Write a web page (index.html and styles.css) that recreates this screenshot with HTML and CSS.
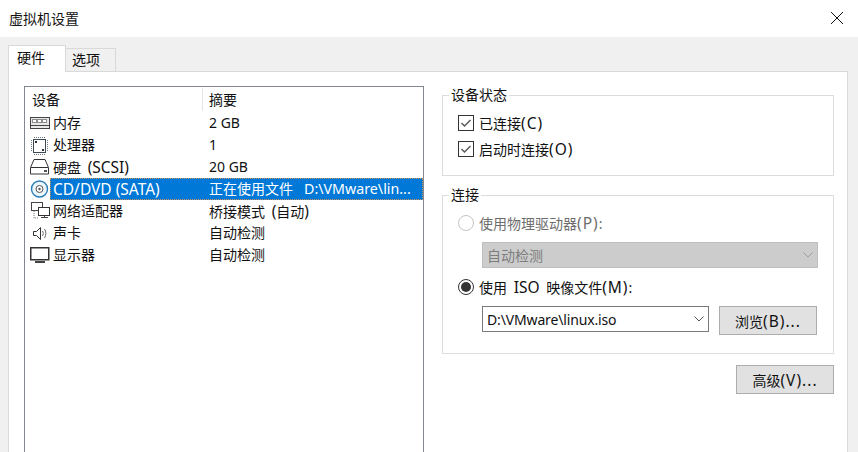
FILE: index.html
```html
<!DOCTYPE html>
<html>
<head>
  <title>虚拟机设置</title>
  <link rel="stylesheet" href="styles.css">
</head>
<body>

  <div class="titlebar">
    <span>虚拟机设置</span>
    <svg class="close" width="12" height="12" viewBox="0 0 12 12"><path d="M0 0L12 12M12 0L0 12" stroke="#111" fill="none"/></svg>
  </div>

  <div class="dialog">
    <div class="tabs">
      <div class="tab active">硬件</div>
      <div class="tab">选项</div>
    </div>

    <div class="pane">
      <div class="device-list">
        <div class="list-head">
          <div class="col-name">设备</div>
          <div class="col-sum">摘要</div>
        </div>

        <div class="row">
          <svg class="icon" width="21" height="20" viewBox="0 0 21 20"><rect x="1.5" y="4.5" width="19" height="11" fill="#e8e8e8" stroke="#444"/><path d="M3 6h15v4H3z" fill="#8c8c8c"/><path d="M4 7h3v2H4zM9 7h3v2H9zM14 7h3v2h-3z" fill="#fff"/><path d="M2 12.5h18" stroke="#444"/></svg>
          <div class="cells">
            <div class="col-name">内存</div>
            <div class="col-sum">2 GB</div>
          </div>
        </div>
        <div class="row">
          <svg class="icon" width="21" height="20" viewBox="0 0 21 20"><rect x="4.5" y="4.5" width="12" height="13" fill="#fff" stroke="#3d4a55"/><path d="M5 2.5h11M5 19.5h11M2.5 5v12M18.5 5v12" stroke="#6b7780" stroke-dasharray="1 1"/><path d="M6 6h2v2H6zM13 14h2v2h-2z" fill="#333"/></svg>
          <div class="cells">
            <div class="col-name">处理器</div>
            <div class="col-sum">1</div>
          </div>
        </div>
        <div class="row">
          <svg class="icon" width="21" height="20" viewBox="0 0 21 20"><path d="M5 2.5h11l3.500 8v6.500h-18v-6.500z" fill="#fff" stroke="#333"/><path d="M2 10.5h17" stroke="#333"/><path d="M15 13h3v2h-3z" fill="#555"/></svg>
          <div class="cells">
            <div class="col-name spaced">硬盘 <span class="en">(SCSI)</span></div>
            <div class="col-sum">20 GB</div>
          </div>
        </div>
        <div class="row selected">
          <svg class="icon" width="21" height="20" viewBox="0 0 21 20"><circle cx="10.5" cy="10" r="8" fill="#eaf5fc" stroke="#2b7fb8" stroke-width="1.4"/><circle cx="10.5" cy="10" r="3.5" fill="#fff" stroke="#555"/><circle cx="10.5" cy="10" r="1.2" fill="#555"/></svg>
          <div class="cells">
            <div class="col-name"><span class="en">CD/DVD (SATA)</span></div>
            <div class="col-sum">正在使用文件<span class="path">D:\VMware\lin...</span></div>
          </div>
        </div>
        <div class="row">
          <svg class="icon" width="21" height="20" viewBox="0 0 21 20"><rect x="2.5" y="1.5" width="11" height="8" fill="#fff" stroke="#444"/><rect x="9.5" y="6.5" width="11" height="8" fill="#fff" stroke="#333"/><path d="M12 16.5h7M15.5 15v1" stroke="#444" fill="none"/><path d="M5 10v7h5" stroke="#777" fill="none" stroke-dasharray="1 1"/></svg>
          <div class="cells">
            <div class="col-name">网络适配器</div>
            <div class="col-sum spaced">桥接模式 <span class="en">(</span>自动<span class="en">)</span></div>
          </div>
        </div>
        <div class="row">
          <svg class="icon" width="21" height="20" viewBox="0 0 21 20"><path d="M4.5 8.5h3l4-4v12l-4-4h-3z" fill="#fff" stroke="#333"/><path d="M13.5 8c1 1.500 1 3.500 0 5M15.5 6c1.800 2.500 1.800 6 0 9" stroke="#666" fill="none"/></svg>
          <div class="cells">
            <div class="col-name">声卡</div>
            <div class="col-sum">自动检测</div>
          </div>
        </div>
        <div class="row">
          <svg class="icon" width="21" height="20" viewBox="0 0 21 20"><rect x="1.75" y="2.75" width="18" height="12" fill="#fff" stroke="#333" stroke-width="1.5"/><path d="M6 17h10" stroke="#444" stroke-width="2"/></svg>
          <div class="cells">
            <div class="col-name">显示器</div>
            <div class="col-sum">自动检测</div>
          </div>
        </div>
      </div>

      <div class="settings">
        <fieldset class="group status">
          <legend>设备状态</legend>
          <div class="option">
            <span class="checkbox"><svg width="12" height="12" viewBox="0 0 12 12"><path d="M1.5 6L4.5 9L10.5 3" stroke="#555" stroke-width="1.4" fill="none"/></svg></span>
            <span>已连接<span class="en key">(C)</span></span>
          </div>
          <div class="option">
            <span class="checkbox"><svg width="12" height="12" viewBox="0 0 12 12"><path d="M1.5 6L4.5 9L10.5 3" stroke="#555" stroke-width="1.4" fill="none"/></svg></span>
            <span>启动时连接<span class="en key">(O)</span></span>
          </div>
        </fieldset>

        <fieldset class="group connect">
          <legend>连接</legend>
          <div class="option disabled">
            <span class="radio"></span>
            <span>使用物理驱动器<span class="en key">(P)</span>:</span>
          </div>
          <div class="field">
            <div class="select locked">
              <span>自动检测</span>
              <svg width="10" height="6" viewBox="0 0 10 6"><path d="M0.5 0.5L5 5L9.5 0.5" stroke="#a0a0a0" fill="none"/></svg>
            </div>
          </div>
          <div class="option">
            <span class="radio on"></span>
            <span class="spaced">使用 <span class="en">ISO</span> 映像文件<span class="en key">(M)</span>:</span>
          </div>
          <div class="field">
            <div class="select iso">
              <span class="iso-path">D:\VMware\linux.iso</span>
              <svg width="10" height="6" viewBox="0 0 10 6"><path d="M0.5 0.5L5 5L9.5 0.5" stroke="#555" fill="none"/></svg>
            </div>
            <button class="btn">浏览<span class="en key">(B)...</span></button>
          </div>
        </fieldset>

        <div class="actions">
          <button class="btn">高级<span class="en key">(V)...</span></button>
        </div>
      </div>
    </div>
  </div>

</body>
</html>
```

FILE: styles.css
```css
body {
  margin: 0;
  height: 452px;
  overflow: hidden;
  font-family: "Noto Sans", "Noto Sans CJK SC", sans-serif;
  font-size: 14px;
  color: #111;
  background: #fff;
}

.en {
  font-size: 15.5px;
}

.key {
  letter-spacing: 1px;
}

.spaced {
  word-spacing: 3px;
}

.titlebar {
  height: 37px;
  display: flex;
  align-items: center;
  justify-content: space-between;
  padding: 0 15px 2px 9px;
  box-sizing: border-box;
}

.dialog {
  background: #f0f0f0;
  height: 415px;
  overflow: hidden;
  padding: 0 10px 0 8px;
}

.tabs {
  display: flex;
  align-items: flex-end;
  height: 34px;
}

.tab {
  width: 51px;
  height: 23px;
  line-height: 22px;
  padding-left: 6px;
  box-sizing: border-box;
  border: 1px solid #d9d9d9;
  border-bottom: none;
  margin-left: -1px;
}

.tab.active {
  width: 58px;
  height: 27px;
  line-height: 24px;
  padding-left: 8px;
  margin-left: 0;
  margin-bottom: -1px;
  background: #fff;
  position: relative;
  z-index: 1;
}

.pane {
  display: flex;
  gap: 18px;
  height: 400px;
  background: #fff;
  border: 1px solid #d9d9d9;
  padding: 14px 13px 0 15px;
}

.device-list {
  width: 398px;
  height: 386px;
  border: 1px solid #828790;
  flex-shrink: 0;
}

.list-head {
  display: flex;
  height: 25px;
  line-height: 26px;
}

.list-head .col-name {
  width: 170px;
  height: 23px;
  margin-top: 1px;
  line-height: 24px;
  padding-left: 7px;
  border-right: 1px solid #e5e5e5;
  margin-right: 6px;
}

.row {
  display: flex;
  align-items: center;
  height: 22px;
  padding-left: 4px;
}

.icon {
  flex-shrink: 0;
}

.cells {
  display: flex;
  flex: 1;
  height: 22px;
  line-height: 22px;
  white-space: nowrap;
}

.cells .col-name {
  width: 156px;
  padding-left: 3px;
}

.cells .col-sum {
  flex: 1;
}

.selected .cells {
  background: #0078d7;
  color: #fff;
  box-sizing: border-box;
  outline: 1px dotted #d0945a;
  outline-offset: -1px;
}

.path {
  margin-left: 11px;
  font-size: 14.25px;
}

.settings {
  width: 392px;
}

.group {
  margin: 0;
  padding: 0 0 0 15px;
  border: 1px solid #dcdcdc;
  box-sizing: border-box;
}

.group legend {
  padding: 0 2px;
  margin-left: -9px;
  line-height: 20px;
}

.status {
  height: 91px;
  padding-top: 5px;
  margin-top: -1px;
}

.connect {
  height: 169px;
  margin-top: 9px;
  padding-top: 5px;
}

.option {
  display: flex;
  align-items: center;
  gap: 5px;
  height: 26px;
}

.option.disabled {
  color: #6d6d6d;
}

.checkbox {
  width: 14px;
  height: 14px;
  border: 1px solid #333;
  display: flex;
  align-items: center;
  justify-content: center;
  flex-shrink: 0;
}

.radio {
  width: 14px;
  height: 14px;
  border: 1px solid #c4c4c4;
  border-radius: 50%;
  position: relative;
  flex-shrink: 0;
}

.radio.on {
  border-color: #333;
}

.radio.on::after {
  content: "";
  position: absolute;
  top: 2px;
  left: 2px;
  width: 10px;
  height: 10px;
  border-radius: 50%;
  background: #333;
}

.field {
  display: flex;
  gap: 10px;
  margin: 6px 0 6px 24px;
}

.select {
  display: flex;
  align-items: center;
  justify-content: space-between;
  box-sizing: border-box;
  height: 26px;
  padding: 0 4px;
  border: 1px solid #7a7a7a;
}

.select.locked {
  width: 336px;
  background: #cccccc;
  border-color: #bfbfbf;
  color: #7d7d7d;
}

.select.iso {
  width: 227px;
}

.iso-path {
  letter-spacing: -0.15px;
}

.btn {
  width: 98px;
  height: 29px;
  padding: 0;
  background: #e1e1e1;
  border: 1px solid #adadad;
  font-family: inherit;
  font-size: 14px;
  color: #111;
}

.actions {
  display: flex;
  justify-content: flex-end;
  margin-top: 11px;
}
```
